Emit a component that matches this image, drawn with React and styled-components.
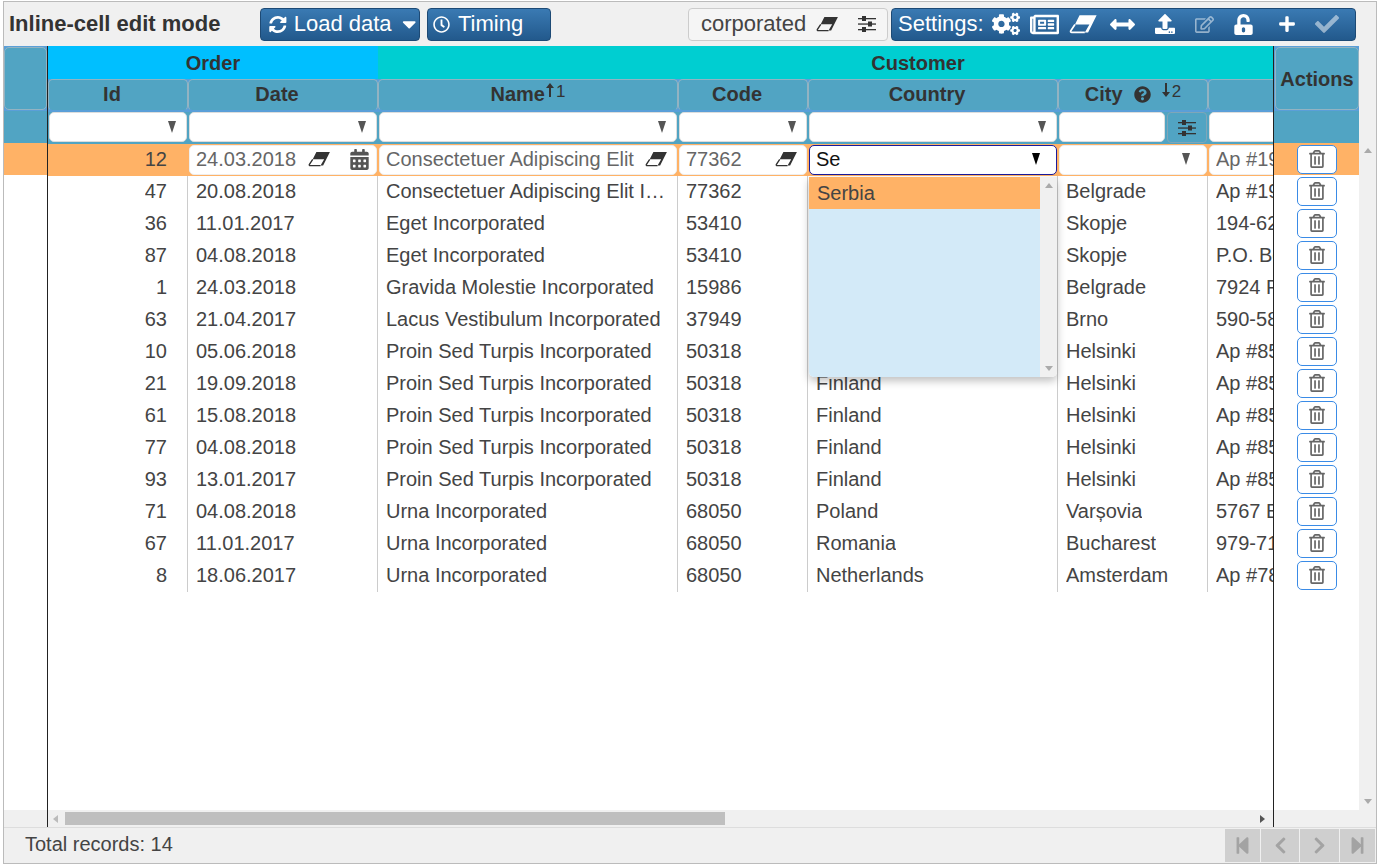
import React from 'react';
import styled, { createGlobalStyle } from 'styled-components';
import {
  FaSyncAlt, FaCaretDown, FaRegClock, FaCogs, FaRegNewspaper, FaArrowsAltH,
  FaUpload, FaRegEdit, FaUnlockAlt, FaPlus, FaCheck, FaCalendarAlt, FaQuestionCircle,
  FaRegTrashAlt, FaStepBackward, FaStepForward, FaChevronLeft, FaChevronRight,
} from 'react-icons/fa';

const GlobalStyle = createGlobalStyle`
  html, body { margin: 0; padding: 0; background: #fff; }
  body { font-family: 'Liberation Sans', Arial, sans-serif; color: #333; overflow: hidden; }
`;

const HEADER_BG = '#51a4c3';
const HEADER_LINE = '#5a9fd8';
const ORANGE = '#ffb266';

const Frame = styled.div`
  box-sizing: border-box;
  width: 1374px;
  height: 863px;
  margin: 1px 0 0 3px;
  border: 1px solid #bbb;
  display: flex;
  flex-direction: column;
  background: #f0f0f0;
`;

const Toolbar = styled.div`
  height: 44px;
  flex: none;
  display: flex;
  align-items: center;
  padding: 0 20px 0 5px;
  box-sizing: border-box;
`;

const Title = styled.div`
  width: 251px;
  font-size: 22px;
  font-weight: bold;
  color: #333;
`;

const BlueButton = styled.div`
  box-sizing: border-box;
  height: 33px;
  width: ${p => p.$w}px;
  margin-right: ${p => p.$mr || 0}px;
  display: flex;
  align-items: center;
  gap: ${p => (p.$gap === undefined ? 7 : p.$gap)}px;
  padding: 0 0 0 ${p => p.$pl || 8}px;
  border: 1px solid #1d4a75;
  border-radius: 4px;
  background: linear-gradient(#3a7ab3, #22598c);
  color: #fff;
  font-size: 22px;
  white-space: nowrap;
`;

const Spacer = styled.div`
  flex: 1;
`;

const QuickFilter = styled.div`
  box-sizing: border-box;
  width: 200px;
  height: 33px;
  margin-right: 3px;
  display: flex;
  align-items: center;
  padding: 0 10px 0 12px;
  border: 1px solid #ccc;
  border-radius: 4px;
  background: #f5f5f5;
  font-size: 22px;
  color: #444;
`;

const QuickText = styled.span`
  width: 115px;
`;

const QuickSliders = styled.span`
  display: inline-flex;
  margin-left: 19px;
  color: #333;
`;

const ToolIcon = styled.span`
  display: inline-flex;
  align-items: center;
  justify-content: center;
  flex: none;
  width: ${p => p.$w}px;
  opacity: ${p => (p.$dim ? 0.5 : 1)};
  font-size: ${p => p.$size || 18}px;
`;

const GridArea = styled.div`
  flex: 1;
  min-height: 0;
  display: flex;
`;

const SidePane = styled.div`
  flex: none;
  width: ${p => p.$w}px;
  display: flex;
  flex-direction: column;
`;

const CenterPane = styled.div`
  flex: none;
  width: 1225px;
  display: flex;
  flex-direction: column;
  position: relative;
  overflow: hidden;
  border-left: 1px solid #222;
  border-right: 1px solid #222;
`;

const CenterScroll = styled.div`
  flex: 1;
  min-height: 0;
  overflow: hidden;
`;

const CenterInner = styled.div`
  width: 1410px;
  height: 100%;
  display: flex;
  flex-direction: column;
`;

const GroupRow = styled.div`
  display: flex;
  height: 33px;
  flex: none;
`;

const GroupCell = styled.div`
  box-sizing: border-box;
  width: ${p => p.$w}px;
  padding-top: 2px;
  display: flex;
  align-items: center;
  justify-content: center;
  background: ${p => p.$bg};
  font-size: 20px;
  font-weight: bold;
  color: #333;
`;

const HeadBand = styled.div`
  display: flex;
  flex: none;
  height: 32px;
  background: ${HEADER_LINE};
`;

const FilterBand = styled.div`
  display: flex;
  flex: none;
  height: 33px;
  background: ${HEADER_BG};
  border-top: 1px solid ${HEADER_LINE};
  box-sizing: border-box;
`;

const HeadCell = styled.div`
  box-sizing: border-box;
  width: ${p => p.$w}px;
  flex: none;
  display: flex;
  align-items: center;
  justify-content: center;
  padding: 0 ${p => (p.$sorted ? 0 : 12)}px 1px 0;
  background: ${HEADER_BG};
  border: 1px solid #93b3c2;
  border-bottom-color: ${HEADER_LINE};
  border-radius: 5px;
  font-size: 20px;
  font-weight: bold;
  color: #333;
`;

const SideHeadWrap = styled.div`
  flex: none;
  height: 64px;
  padding: 1px 0 0 ${p => p.$pl || 0}px;
  box-sizing: border-box;
  background: ${HEADER_LINE};
  display: flex;
`;

const SideHead = styled.div`
  box-sizing: border-box;
  flex: 1;
  display: flex;
  align-items: center;
  justify-content: center;
  padding-top: 2px;
  background: ${HEADER_BG};
  border: 1px solid #93b3c2;
  border-radius: 5px;
  font-size: 20px;
  font-weight: bold;
  color: #333;
`;

const SortMark = styled.span`
  display: flex;
  align-items: flex-start;
  gap: 2px;
  align-self: flex-start;
  margin: 3px 0 0 ${p => p.$ml || 0}px;
  font-size: 17px;
  font-weight: normal;
  line-height: 18px;
  color: #333;
`;

const HelpIcon = styled(FaQuestionCircle)`
  font-size: 17px;
  margin-left: 11px;
  color: #333;
`;

const FilterCell = styled.div`
  box-sizing: border-box;
  width: ${p => p.$w}px;
  flex: none;
  padding: 0 1px;
  display: flex;
  gap: 2px;
`;

const FilterInput = styled.div`
  box-sizing: border-box;
  flex: 1;
  height: 30px;
  display: flex;
  align-items: center;
  justify-content: flex-end;
  padding-right: 10px;
  background: #fff;
  border: 1px solid #ddd;
  border-radius: 5px;
`;

const Arrow = styled.span`
  display: block;
  width: 0;
  height: 0;
  border-left: 4.5px solid transparent;
  border-right: 4.5px solid transparent;
  border-top: 12px solid ${p => p.$color || '#555'};
`;

const FilterButton = styled.div`
  box-sizing: border-box;
  width: 40px;
  height: 31px;
  display: flex;
  align-items: center;
  justify-content: center;
  border: 1px solid #7fa6b8;
  border-radius: 4px;
  color: #333;
`;

const Rows = styled.div`
  flex: 1;
  min-height: 0;
  background: #fff;
`;

const Row = styled.div`
  display: flex;
  height: 32px;
  background: ${p => (p.$active ? ORANGE : 'transparent')};
`;

const Cell = styled.div`
  box-sizing: border-box;
  width: ${p => p.$w}px;
  flex: none;
  padding: 0 ${p => (p.$right ? 20 : 8)}px 2px 8px;
  display: flex;
  align-items: center;
  justify-content: ${p => (p.$right ? 'flex-end' : 'flex-start')};
  border-right: 1px solid ${p => (p.$plain ? 'transparent' : '#ccc')};
  font-size: 20px;
  color: #444;
  white-space: nowrap;
  overflow: hidden;
`;

const CellText = styled.span`
  overflow: hidden;
  text-overflow: ellipsis;
`;

const EditCell = styled.div`
  box-sizing: border-box;
  width: ${p => p.$w}px;
  flex: none;
  padding: 1px;
`;

const EditBox = styled.div`
  box-sizing: border-box;
  height: 30px;
  display: flex;
  align-items: center;
  padding: 0 ${p => p.$pr || 8}px 2px 6px;
  background: #fff;
  border: 1px solid ${p => (p.$focus ? '#1a1a9c' : '#eee')};
  border-radius: 5px;
  font-size: 20px;
  color: ${p => (p.$focus ? '#111' : '#666')};
  white-space: nowrap;
  overflow: hidden;
`;

const EditText = styled.span`
  flex: 1;
  min-width: 0;
  overflow: hidden;
`;

const Calendar = styled(FaCalendarAlt)`
  font-size: 21px;
  color: #555;
  margin-left: 18px;
`;

const RightRow = styled.div`
  height: 32px;
  display: flex;
  align-items: center;
  justify-content: center;
  padding-left: 1px;
  background: ${p => (p.$active ? ORANGE : 'transparent')};
`;

const TrashButton = styled.div`
  box-sizing: border-box;
  width: 40px;
  height: 29px;
  display: flex;
  align-items: center;
  justify-content: center;
  background: #fff;
  border: 1px solid #3a8be6;
  border-radius: 5px;
  color: #666;
  font-size: 18px;
`;

const HScrollRow = styled.div`
  flex: none;
  height: 17px;
  background: #f0f0f0;
  display: flex;
  align-items: center;
`;

const ScrollThumb = styled.div`
  width: 660px;
  height: 13px;
  margin-left: 7px;
  background: #bfbfbf;
`;

const HArrow = styled.span`
  display: block;
  width: 0;
  height: 0;
  margin-left: ${p => p.$ml || 0}px;
  border-top: 4px solid transparent;
  border-bottom: 4px solid transparent;
  ${p => (p.$dir === 'left'
    ? 'border-right: 5px solid #bbb;'
    : 'border-left: 5px solid #555;')}
`;

const VScroll = styled.div`
  flex: 1;
  display: flex;
  flex-direction: column;
  align-items: center;
  padding: 102px 0 23px;
  box-sizing: border-box;
  justify-content: space-between;
`;

const VArrow = styled.span`
  display: block;
  width: 0;
  height: 0;
  border-left: 4px solid transparent;
  border-right: 4px solid transparent;
  ${p => (p.$dir === 'up'
    ? 'border-bottom: 5px solid #aaa;'
    : 'border-top: 5px solid #aaa;')}
`;

const Dropdown = styled.div`
  position: absolute;
  left: 761px;
  top: 131px;
  width: 248px;
  height: 200px;
  display: flex;
  border-radius: 0 0 5px 5px;
  box-shadow: 0 4px 8px rgba(0, 0, 0, 0.25);
  overflow: hidden;
`;

const DropList = styled.div`
  flex: 1;
  background: #d3eaf8;
`;

const DropItem = styled.div`
  height: 32px;
  display: flex;
  align-items: center;
  padding-left: 8px;
  background: ${ORANGE};
  font-size: 20px;
  color: #444;
`;

const DropBar = styled.div`
  width: 17px;
  background: #f0f0f0;
  display: flex;
  flex-direction: column;
  align-items: center;
  justify-content: space-between;
  padding: 6px 0;
  box-sizing: border-box;
`;

const Footer = styled.div`
  flex: none;
  height: 36px;
  box-sizing: border-box;
  border-top: 1px solid #ddd;
  display: flex;
  align-items: center;
  padding: 0 1px 0 21px;
  font-size: 20px;
  color: #444;
`;

const FooterText = styled.span`
  margin-bottom: 2px;
`;

const Pager = styled.div`
  display: flex;
  gap: 1px;
  margin-left: auto;
`;

const PageButton = styled.div`
  box-sizing: border-box;
  width: ${p => p.$w}px;
  height: 33px;
  display: flex;
  align-items: center;
  justify-content: center;
  background: #cfcfcf;
  color: #a3a3a3;
  font-size: 19px;
`;

// the FA4 eraser: filled body, the lower left part is only an outline
function Eraser({ color = '#333', size = 23 }) {
  return (
    <svg width={size} height={size * 0.68} viewBox="0 0 22 15">
      <path d="M8 1 H21 L14.5 14 H12 L15.5 8 H4.5 Z" fill={color} />
      <path d="M4.5 8 L1.2 13 Q1 14 2 14 H12" fill="none" stroke={color} strokeWidth="1.3" />
    </svg>
  );
}

// the FA4 sliders: three rules with a knob each
function Sliders({ size = 18 }) {
  return (
    <svg width={size} height={size} viewBox="0 0 18 18" fill="currentColor">
      <rect x="0" y="3" width="18" height="1.3" />
      <rect x="4" y="1" width="4" height="5" />
      <rect x="0" y="8.4" width="18" height="1.3" />
      <rect x="10" y="6.5" width="4" height="5" />
      <rect x="0" y="14" width="18" height="1.3" />
      <rect x="4" y="12" width="4" height="5" />
    </svg>
  );
}

// the tall thin arrow next to a sort index
function SortArrow({ up }) {
  return (
    <svg width="8" height="14" viewBox="0 0 8 14" fill="#333">
      <g transform={up ? undefined : 'rotate(180 4 7)'}>
        <path d="M4 0 L8 5 H5 V14 H3 V5 H0 Z" />
      </g>
    </svg>
  );
}

const columns = [
  { key: 'id', width: 140, right: true },
  { key: 'date', width: 190 },
  { key: 'name', width: 300 },
  { key: 'code', width: 130 },
  { key: 'country', width: 250 },
  { key: 'city', width: 150 },
  { key: 'address', width: 250 },
];

const rows = [
  [47, '20.08.2018', 'Consectetuer Adipiscing Elit Incorporated', '77362', 'Serbia', 'Belgrade', 'Ap #192-5231 Elit St.'],
  [36, '11.01.2017', 'Eget Incorporated', '53410', 'Macedonia', 'Skopje', '194-6217 Non Road'],
  [87, '04.08.2018', 'Eget Incorporated', '53410', 'Macedonia', 'Skopje', 'P.O. Box 218, 4210'],
  [1, '24.03.2018', 'Gravida Molestie Incorporated', '15986', 'Serbia', 'Belgrade', '7924 Fusce Avenue'],
  [63, '21.04.2017', 'Lacus Vestibulum Incorporated', '37949', 'Czech Republic', 'Brno', '590-5817 Nunc Rd.'],
  [10, '05.06.2018', 'Proin Sed Turpis Incorporated', '50318', 'Finland', 'Helsinki', 'Ap #851-2145 Nec St.'],
  [21, '19.09.2018', 'Proin Sed Turpis Incorporated', '50318', 'Finland', 'Helsinki', 'Ap #851-2145 Nec St.'],
  [61, '15.08.2018', 'Proin Sed Turpis Incorporated', '50318', 'Finland', 'Helsinki', 'Ap #851-2145 Nec St.'],
  [77, '04.08.2018', 'Proin Sed Turpis Incorporated', '50318', 'Finland', 'Helsinki', 'Ap #851-2145 Nec St.'],
  [93, '13.01.2017', 'Proin Sed Turpis Incorporated', '50318', 'Finland', 'Helsinki', 'Ap #851-2145 Nec St.'],
  [71, '04.08.2018', 'Urna Incorporated', '68050', 'Poland', 'Varșovia', '5767 Erat Street'],
  [67, '11.01.2017', 'Urna Incorporated', '68050', 'Romania', 'Bucharest', '979-7124 Dui Av.'],
  [8, '18.06.2017', 'Urna Incorporated', '68050', 'Netherlands', 'Amsterdam', 'Ap #781-3324 Sed Rd.'],
];

export default function App() {
  return (
    <>
      <GlobalStyle />
      <Frame>
        <Toolbar>
          <Title>Inline-cell edit mode</Title>
          <BlueButton $w={160} $mr={7}>
            <FaSyncAlt size={19} /> Load data <FaCaretDown size={22} />
          </BlueButton>
          <BlueButton $w={124} $pl={5} $gap={8}>
            <FaRegClock size={17} /> Timing
          </BlueButton>
          <Spacer />
          <QuickFilter>
            <QuickText>corporated</QuickText>
            <Eraser />
            <QuickSliders><Sliders /></QuickSliders>
          </QuickFilter>
          <BlueButton $w={465} $pl={6} $gap={0}>
            Settings:
            <ToolIcon $w={44} $size={28}><FaCogs /></ToolIcon>
            <ToolIcon $w={34} $size={29}><FaRegNewspaper /></ToolIcon>
            <ToolIcon $w={44}><Eraser color="#fff" size={29} /></ToolIcon>
            <ToolIcon $w={34} $size={25}><FaArrowsAltH /></ToolIcon>
            <ToolIcon $w={50} $size={20}><FaUpload /></ToolIcon>
            <ToolIcon $w={30} $size={19} $dim><FaRegEdit /></ToolIcon>
            <ToolIcon $w={48} $size={21}><FaUnlockAlt /></ToolIcon>
            <ToolIcon $w={38} $size={18}><FaPlus /></ToolIcon>
            <ToolIcon $w={42} $size={24} $dim><FaCheck /></ToolIcon>
          </BlueButton>
        </Toolbar>

        <GridArea>
          <SidePane $w={43}>
            <SideHeadWrap><SideHead /></SideHeadWrap>
            <FilterBand />
            <Row $active />
            <Rows />
            <HScrollRow />
          </SidePane>

          <CenterPane>
            <CenterScroll>
              <CenterInner>
                <GroupRow>
                  <GroupCell $w={330} $bg="#00bfff">Order</GroupCell>
                  <GroupCell $w={1080} $bg="#00ced1">Customer</GroupCell>
                </GroupRow>
                <HeadBand>
                  <HeadCell $w={140}>Id</HeadCell>
                  <HeadCell $w={190}>Date</HeadCell>
                  <HeadCell $w={300} $sorted>Name<SortMark $ml={1}><SortArrow up />1</SortMark></HeadCell>
                  <HeadCell $w={130}>Code</HeadCell>
                  <HeadCell $w={250}>Country</HeadCell>
                  <HeadCell $w={150} $sorted>City<HelpIcon /><SortMark $ml={11}><SortArrow />2</SortMark></HeadCell>
                  <HeadCell $w={250} />
                </HeadBand>
                <FilterBand>
                  <FilterCell $w={140}><FilterInput><Arrow /></FilterInput></FilterCell>
                  <FilterCell $w={190}><FilterInput><Arrow /></FilterInput></FilterCell>
                  <FilterCell $w={300}><FilterInput><Arrow /></FilterInput></FilterCell>
                  <FilterCell $w={130}><FilterInput><Arrow /></FilterInput></FilterCell>
                  <FilterCell $w={250}><FilterInput><Arrow /></FilterInput></FilterCell>
                  <FilterCell $w={150}>
                    <FilterInput />
                    <FilterButton><Sliders /></FilterButton>
                  </FilterCell>
                  <FilterCell $w={250}><FilterInput /></FilterCell>
                </FilterBand>
                <Rows>
                  <Row $active>
                    <Cell $w={140} $right $plain>12</Cell>
                    <EditCell $w={190}>
                      <EditBox $pr={6}>
                        <EditText>24.03.2018</EditText>
                        <Eraser />
                        <Calendar />
                      </EditBox>
                    </EditCell>
                    <EditCell $w={300}>
                      <EditBox>
                        <EditText>Consectetuer Adipiscing Elit</EditText>
                        <Eraser />
                      </EditBox>
                    </EditCell>
                    <EditCell $w={130}>
                      <EditBox>
                        <EditText>77362</EditText>
                        <Eraser />
                      </EditBox>
                    </EditCell>
                    <EditCell $w={250}>
                      <EditBox $focus $pr={16}>
                        <EditText>Se</EditText>
                        <Arrow $color="#000" />
                      </EditBox>
                    </EditCell>
                    <EditCell $w={150}>
                      <EditBox $pr={16}>
                        <EditText />
                        <Arrow />
                      </EditBox>
                    </EditCell>
                    <EditCell $w={250}>
                      <EditBox><EditText>Ap #192-5231 Elit St.</EditText></EditBox>
                    </EditCell>
                  </Row>
                  {rows.map(row => (
                    <Row key={row[0]}>
                      {columns.map((col, i) => (
                        <Cell key={col.key} $w={col.width} $right={col.right}>
                          <CellText>{row[i]}</CellText>
                        </Cell>
                      ))}
                    </Row>
                  ))}
                </Rows>
              </CenterInner>
            </CenterScroll>
            <HScrollRow>
              <HArrow $dir="left" $ml={5} />
              <ScrollThumb />
              <HArrow $dir="right" $ml={535} />
            </HScrollRow>
            <Dropdown>
              <DropList>
                <DropItem>Serbia</DropItem>
              </DropList>
              <DropBar>
                <VArrow $dir="up" />
                <VArrow $dir="down" />
              </DropBar>
            </Dropdown>
          </CenterPane>

          <SidePane $w={85}>
            <SideHeadWrap $pl={1}><SideHead>Actions</SideHead></SideHeadWrap>
            <FilterBand />
            <RightRow $active><TrashButton><FaRegTrashAlt /></TrashButton></RightRow>
            <Rows>
              {rows.map(row => (
                <RightRow key={row[0]}><TrashButton><FaRegTrashAlt /></TrashButton></RightRow>
              ))}
            </Rows>
            <HScrollRow />
          </SidePane>

          <SidePane $w={17}>
            <VScroll>
              <VArrow $dir="up" />
              <VArrow $dir="down" />
            </VScroll>
          </SidePane>
        </GridArea>

        <Footer>
          <FooterText>Total records: 14</FooterText>
          <Pager>
            <PageButton $w={35}><FaStepBackward /></PageButton>
            <PageButton $w={38}><FaChevronLeft /></PageButton>
            <PageButton $w={39}><FaChevronRight /></PageButton>
            <PageButton $w={35}><FaStepForward /></PageButton>
          </Pager>
        </Footer>
      </Frame>
    </>
  );
}
